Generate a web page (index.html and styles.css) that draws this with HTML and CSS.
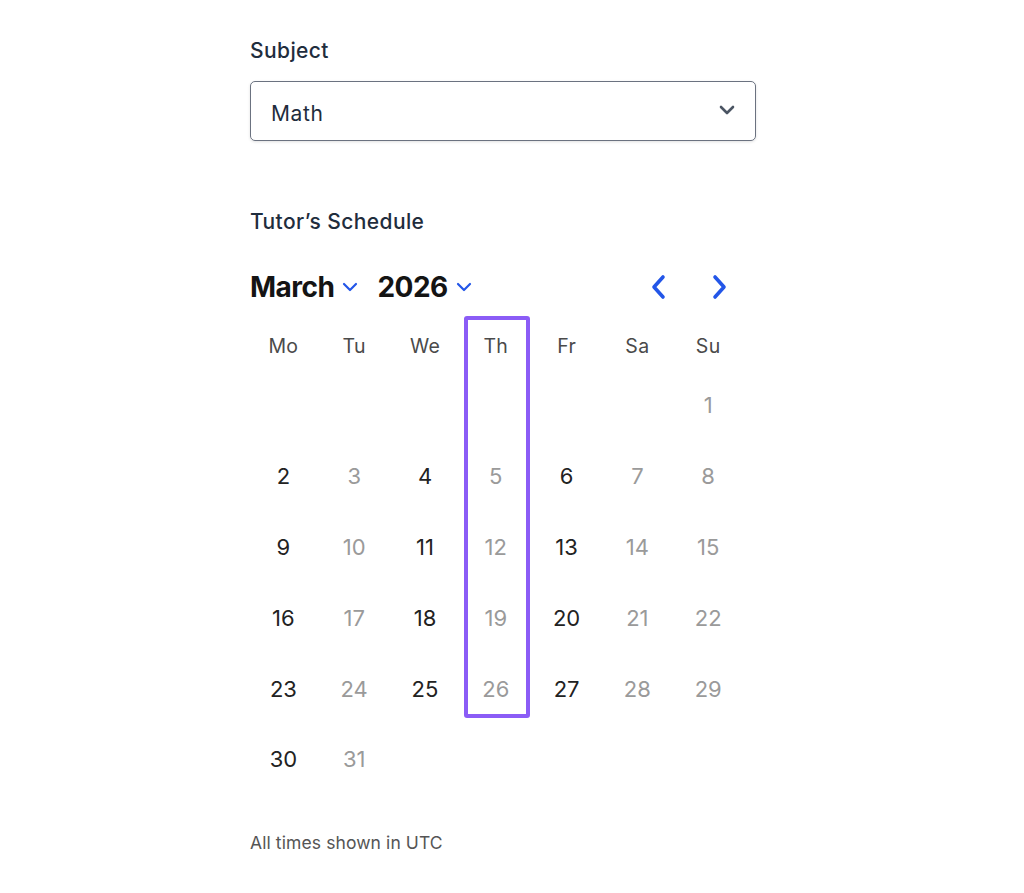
FILE: index.html
```html
<!DOCTYPE html>
<html>
<head>
<meta charset="utf-8">
<link rel="stylesheet" href="styles.css">
</head>
<body>
<div class="page">
  <div class="label first">Subject</div>
  <div class="select">
    <span class="select-value">Math</span>
    <svg class="select-chev" width="16" height="10" viewBox="0 0 16 10"><path d="M2 2l6 6 6-6" fill="none" stroke="#4b5563" stroke-width="2.6" stroke-linecap="round" stroke-linejoin="round"/></svg>
  </div>

  <div class="label second">Tutor’s Schedule</div>

  <div class="cal-head">
    <div class="picks">
      <span class="pick">March<svg class="mini" width="16" height="10" viewBox="0 0 16 10"><path d="M2 2l6 6 6-6" fill="none" stroke="#2356e8" stroke-width="2.2" stroke-linecap="round" stroke-linejoin="round"/></svg></span>
      <span class="pick">2026<svg class="mini" width="16" height="10" viewBox="0 0 16 10"><path d="M2 2l6 6 6-6" fill="none" stroke="#2356e8" stroke-width="2.2" stroke-linecap="round" stroke-linejoin="round"/></svg></span>
    </div>
    <div class="nav">
      <svg width="20" height="26" viewBox="0 0 20 26"><path d="M14 3L5 13l9 10" fill="none" stroke="#2356e8" stroke-width="3.6" stroke-linecap="round" stroke-linejoin="round"/></svg>
      <svg width="20" height="26" viewBox="0 0 20 26"><path d="M6 3l9 10-9 10" fill="none" stroke="#2356e8" stroke-width="3.6" stroke-linecap="round" stroke-linejoin="round"/></svg>
    </div>
  </div>

  <div class="grid">
    <div class="dow">Mo</div><div class="dow">Tu</div><div class="dow">We</div><div class="dow">Th</div><div class="dow">Fr</div><div class="dow">Sa</div><div class="dow">Su</div>
    <div></div><div></div><div></div><div></div><div></div><div></div><div class="d off">1</div>
    <div class="d">2</div><div class="d off">3</div><div class="d">4</div><div class="d off">5</div><div class="d">6</div><div class="d off">7</div><div class="d off">8</div>
    <div class="d">9</div><div class="d off">10</div><div class="d">11</div><div class="d off">12</div><div class="d">13</div><div class="d off">14</div><div class="d off">15</div>
    <div class="d">16</div><div class="d off">17</div><div class="d">18</div><div class="d off">19</div><div class="d">20</div><div class="d off">21</div><div class="d off">22</div>
    <div class="d">23</div><div class="d off">24</div><div class="d">25</div><div class="d off">26</div><div class="d">27</div><div class="d off">28</div><div class="d off">29</div>
    <div class="d">30</div><div class="d off">31</div><div></div><div></div><div></div><div></div><div></div>
    <div class="highlight"></div>
  </div>

  <div class="note">All times shown in UTC</div>
</div>
</body>
</html>
```
FILE: styles.css
```css
* { box-sizing: border-box; }
html, body { margin: 0; padding: 0; background: #fff; }
body { font-family: Inter, "Noto Sans", sans-serif; }
.page { width: 506px; margin-left: 250px; padding-bottom: 20px; }
.label { font-size: 21px; line-height: 24px; font-weight: 500; color: #1f2d3d; letter-spacing: 0.4px; }
.label.first { padding-top: 39px; }
.label.second { margin-top: 69px; }
.select {
  margin-top: 18px; height: 60px; border: 1.5px solid #6b7280; border-radius: 5px;
  display: flex; align-items: center; justify-content: space-between;
  padding: 4px 20px 0 20px; box-shadow: 0 1px 3px rgba(0,0,0,0.12);
}
.select-value { font-size: 21px; color: #1f2d3d; letter-spacing: 0.6px; }
.select-chev { margin-top: -6px; }
.cal-head { margin-top: 33px; height: 40px; display: flex; align-items: center; justify-content: space-between; width: 480px; }
.picks { display: flex; gap: 19px; align-items: center; }
.pick { font-size: 28px; font-weight: 700; color: #141414; letter-spacing: -0.5px; display: flex; align-items: center; gap: 8px; }
.nav { display: flex; gap: 40px; align-items: center; padding-right: 1px; }
.grid {
  position: relative; margin-top: 15px; margin-left: -2px; width: 496px;
  display: grid; grid-template-columns: repeat(7, 70.8px);
  grid-template-rows: 48px repeat(6, 70.8px);
}
.dow, .d { display: flex; align-items: center; justify-content: center; }
.dow { font-size: 19.5px; color: #4a4a4a; letter-spacing: 0.3px; }
.d { font-size: 22px; color: #222; }
.d.off { color: #9a9a9a; }
.highlight {
  position: absolute; left: 216px; top: -6px; width: 66px; height: 402px;
  border: 4px solid #8b5cf6; border-radius: 3px; pointer-events: none;
}
.note { margin-top: 38px; font-size: 17.5px; line-height: 20px; color: #555; letter-spacing: 0.1px; }
```
